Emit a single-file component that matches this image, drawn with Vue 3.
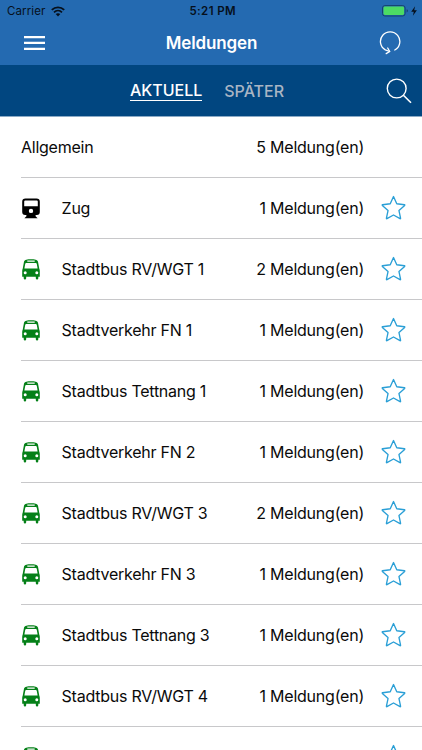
<script setup>
const rows = [
  { name: 'Allgemein', count: 5, kind: 'none' },
  { name: 'Zug', count: 1, kind: 'train' },
  { name: 'Stadtbus RV/WGT 1', count: 2, kind: 'bus' },
  { name: 'Stadtverkehr FN 1', count: 1, kind: 'bus' },
  { name: 'Stadtbus Tettnang 1', count: 1, kind: 'bus' },
  { name: 'Stadtverkehr FN 2', count: 1, kind: 'bus' },
  { name: 'Stadtbus RV/WGT 3', count: 2, kind: 'bus' },
  { name: 'Stadtverkehr FN 3', count: 1, kind: 'bus' },
  { name: 'Stadtbus Tettnang 3', count: 1, kind: 'bus' },
  { name: 'Stadtbus RV/WGT 4', count: 1, kind: 'bus' },
  { name: '', count: 0, kind: 'bus' },
]
</script>

<template>
  <div class="screen">
    <header class="top">
      <div class="status">
        <div class="carrier">
          <span>Carrier</span>
          <svg class="wifi" width="14" height="11" viewBox="0 0 14 11">
            <path d="M0.8 3.9C4.3 0.5 9.7 0.5 13.2 3.9" fill="none" stroke="#06101c" stroke-width="1.9" />
            <path d="M3 6.3C5.3 4.1 8.7 4.1 11 6.3" fill="none" stroke="#06101c" stroke-width="1.8" />
            <path d="M4.7 8.1C6 6.9 8 6.9 9.3 8.1L7 10.5Z" fill="#06101c" />
          </svg>
        </div>
        <div class="time">5:21 PM</div>
        <div class="power">
          <svg width="36" height="12" viewBox="0 0 36 12">
            <rect x="0.5" y="0.6" width="22.6" height="10.4" rx="2.4" fill="none" stroke="#15406f" />
            <rect x="1.5" y="1.6" width="20.6" height="8.4" rx="1.4" fill="#4cdb64" />
            <path d="M24.6 4.2C26.4 4.6 26.4 7 24.6 7.4Z" fill="#15406f" />
            <path d="M33.1 1.2L29.2 6.7H31.8L30.9 10.8L34.9 5.2H32.2Z" fill="#06101c" />
          </svg>
        </div>
      </div>
      <div class="nav">
        <div class="side">
          <svg width="22" height="16" viewBox="0 0 22 16">
            <path d="M0 2.2H21M0 7.9H21M0 13.8H21" stroke="#fff" stroke-width="2.3" />
          </svg>
        </div>
        <h1>Meldungen</h1>
        <div class="side right">
          <svg width="22" height="24" viewBox="0 0 22 24" fill="none" stroke="#fff" stroke-width="1.3" stroke-linecap="round" stroke-linejoin="round">
            <path d="M15.8 19A9.7 9.7 0 1 0 6.3 18.9L10.6 20.5" />
            <path d="M8.7 17L10.7 20.5L7.2 22.6" />
          </svg>
        </div>
      </div>
    </header>
    <nav class="tabs">
      <span></span>
      <div class="pair">
        <span class="tab active">AKTUELL</span>
        <span class="tab later">SPÄTER</span>
      </div>
      <svg class="search" width="26" height="26" viewBox="0 0 26 26" fill="none" stroke="#fff">
        <circle cx="10.7" cy="10.5" r="9.4" stroke-width="1.4" />
        <path d="M17.4 17.2L25 24.7" stroke-width="1.6" />
      </svg>
    </nav>
    <main class="list">
      <div v-for="(r, i) in rows" :key="i" class="row">
        <div v-if="r.kind !== 'none'" class="icon">
          <svg v-if="r.kind === 'train'" width="18" height="21" viewBox="0 0 18 21">
            <path fill-rule="evenodd" fill="#000" d="M3.5 0.4H14.5Q17.8 0.4 17.8 3.7V14Q17.8 17 14.8 17H13.6V18.2L15.6 20.3H2.4L4.4 18.2V17H3.2Q0.2 17 0.2 14V3.7Q0.2 0.4 3.5 0.4ZM3.2 2.4Q2.2 2.4 2.2 3.4V8.3H15.8V3.4Q15.8 2.4 14.8 2.4ZM9 10.7A2.2 2.2 0 1 0 9 15.1A2.2 2.2 0 1 0 9 10.7Z" />
          </svg>
          <svg v-else width="18" height="21" viewBox="0 0 18 21">
            <path fill-rule="evenodd" fill="#058018" d="M9 0.2C12.5 0.2 15.6 0.8 16 2.7L17.3 9.8Q17.8 10.6 17.8 12V17.8H16.3V19.2A1.25 1.25 0 0 1 13.8 19.2V17.8H4.2V19.2A1.25 1.25 0 0 1 1.7 19.2V17.8H0.2V12Q0.2 10.6 0.7 9.8L2 2.7C2.4 0.8 5.5 0.2 9 0.2ZM5.3 1.6V2.7H12.7V1.6ZM4.2 4.1Q3.4 4.1 3.2 4.9L2.4 9.6H15.6L14.8 4.9Q14.6 4.1 13.8 4.1ZM3.2 12.2A1.5 1.5 0 1 0 3.2 15.2A1.5 1.5 0 1 0 3.2 12.2ZM14.8 12.2A1.5 1.5 0 1 0 14.8 15.2A1.5 1.5 0 1 0 14.8 12.2Z" />
          </svg>
        </div>
        <div class="name">{{ r.name }}</div>
        <div v-if="r.count" class="count">{{ r.count }} Meldung(en)</div>
        <div class="star">
          <svg v-if="r.kind !== 'none'" width="25" height="25" viewBox="0 0 26 26">
            <path d="M13 1.6L16.4 9.1L24.4 10.1Q25 10.3 24.6 10.8L18.7 16.2L20.4 24.2Q20.4 24.9 19.8 24.6L13 20.8L6.2 24.6Q5.6 24.9 5.6 24.2L7.3 16.2L1.4 10.8Q1 10.3 1.6 10.1L9.6 9.1Z" fill="none" stroke="#2a9fd6" stroke-width="1.4" stroke-linejoin="round" />
          </svg>
        </div>
      </div>
    </main>
  </div>
</template>

<style>
body { margin: 0; background: #fff; }
</style>

<style scoped>
.screen {
  width: 422px;
  height: 750px;
  overflow: hidden;
  background: #fff;
  color: #0a0a0a;
  font-family: Inter, "Liberation Sans", sans-serif;
  display: flex;
  flex-direction: column;
}
.top { height: 65px; flex: none; background: #246ab1; }
.status {
  height: 21px;
  display: grid;
  grid-template-columns: 1fr auto 1fr;
  align-items: center;
  padding: 1px 4.5px 0 7px;
  box-sizing: border-box;
  font-size: 11.5px;
  line-height: 20px;
  color: #06101c;
}
.carrier { display: flex; align-items: center; gap: 6px; letter-spacing: 0.1px; }
.time { font-weight: 600; letter-spacing: 0.4px; padding-left: 1px; }
.power { display: flex; justify-content: flex-end; }
.nav {
  height: 44px;
  display: grid;
  grid-template-columns: 1fr auto 1fr;
  align-items: center;
  padding: 0 21px 0 24px;
}
.side { display: flex; }
.right { justify-content: flex-end; }
h1 { margin: 0; padding-right: 2px; font-size: 17px; font-weight: 600; line-height: 44px; color: #fff; letter-spacing: -0.12px; }
.tabs {
  height: 52px;
  flex: none;
  display: grid;
  grid-template-columns: 1fr auto 1fr;
  align-items: center;
  padding: 0 10px 0 6px;
  background: #014680;
  border-bottom: 1px solid #8baac6;
  box-sizing: border-box;
}
.pair { display: flex; align-items: flex-start; gap: 22px; padding-right: 4px; font-size: 16px; font-weight: 500; }
.tab { line-height: 20px; }
.active { color: #fff; border-bottom: 1px solid #fff; line-height: 20px; }
.later { color: #a9b5c4; padding-top: 1px; }
.search { justify-self: end; }
.list { flex: 1; padding-left: 21px; }
.row {
  height: 61.05px;
  box-sizing: border-box;
  border-bottom: 1px solid #c8c8ca;
  display: flex;
  align-items: center;
  padding-right: 16.5px;
  font-size: 16px;
  white-space: nowrap;
}
.icon { width: 40.6px; display: flex; padding-left: 1px; box-sizing: border-box; }
.name { flex: 1; letter-spacing: -0.25px; }
.count { letter-spacing: -0.23px; }
.star { width: 41.5px; height: 25px; padding-bottom: 2px; display: flex; justify-content: flex-end; }
</style>
